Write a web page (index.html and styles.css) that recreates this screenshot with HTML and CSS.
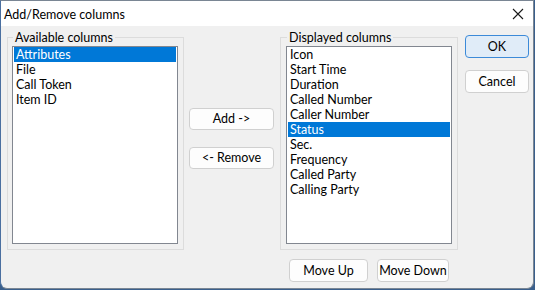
FILE: index.html
```
<!DOCTYPE html>
<html>
	<head>
		<meta charset="utf-8" />
		<title>Add/Remove columns</title>
		<link rel="stylesheet" href="styles.css">
	</head>
	<body>
		<div class="window">
			<div class="titlebar">
				<span class="title">Add/Remove columns</span>
				<svg class="close" width="12" height="12" viewBox="0 0 12 12">
					<path d="M1 1 L11 11 M11 1 L1 11" stroke="#1a1a1a" stroke-width="1.1" fill="none"/>
				</svg>
			</div>
			<div class="content">
				<fieldset class="group group-left">
					<legend>Available columns</legend>
					<ul class="list">
						<li class="on">Attributes</li>
						<li>File</li>
						<li>Call Token</li>
						<li>Item ID</li>
					</ul>
				</fieldset>

				<div class="mid">
					<button class="btn btn-mid">Add -&gt;</button>
					<button class="btn btn-mid">&lt;- Remove</button>
				</div>

				<div class="right">
					<fieldset class="group group-right">
						<legend>Displayed columns</legend>
						<ul class="list">
							<li>Icon</li>
							<li>Start Time</li>
							<li>Duration</li>
							<li>Called Number</li>
							<li>Caller Number</li>
							<li class="on">Status</li>
							<li>Sec.</li>
							<li>Frequency</li>
							<li>Called Party</li>
							<li>Calling Party</li>
						</ul>
					</fieldset>
					<div class="move">
						<button class="btn btn-up">Move Up</button>
						<button class="btn btn-down">Move Down</button>
					</div>
				</div>

				<div class="side">
					<button class="btn btn-side default">OK</button>
					<button class="btn btn-side">Cancel</button>
				</div>
			</div>
		</div>
	</body>
</html>
```

FILE: styles.css
```
*{
	margin: 0;
	padding: 0;
	box-sizing: border-box;
}
body{
	background: #3a5f8c;
	width: 535px;
	height: 290px;
	overflow: hidden;
	font-family: Lato, "Noto Sans", sans-serif;
	font-size: 12.5px;
	color: #000;
}
.window{
	width: 534px;
	height: 289px;
	background: #f0f0f0;
	border: 1px solid #7a8694;
	border-left-color: #4a6fa0;
	border-radius: 0 0 7px 7px;
	overflow: hidden;
}
.titlebar{
	height: 25px;
	background: #fff;
	display: flex;
	align-items: center;
	justify-content: space-between;
	padding: 0 9px 0 3px;
}
.title{
	line-height: 15px;
	margin-top: 1px;
}
.content{
	display: flex;
	align-items: flex-start;
	padding: 4px 0 0 6px;
}
.group{
	border: 1px solid #dcdcdc;
	padding: 1px 5px 5px 4px;
}
.group legend{
	margin-left: 1px;
	padding: 0 2px;
	line-height: 15px;
}
.group-left{
	width: 177px;
}
.group-right{
	width: 178px;
	padding-left: 5px;
}
.list{
	list-style: none;
	background: #fff;
	border: 1px solid #828790;
	height: 198px;
	padding: 0 1px;
}
.list li{
	height: 15px;
	line-height: 15px;
	padding-left: 2px;
	white-space: nowrap;
}
.list .on{
	background: #0078d7;
	color: #fff;
}
.btn{
	display: block;
	font: inherit;
	color: #000;
	background: #fdfdfd;
	border: 1px solid #d0d0d0;
	border-radius: 4px;
	height: 22px;
	line-height: 18px;
}
.mid{
	margin-left: 5px;
	padding-top: 78px;
	display: flex;
	flex-direction: column;
	gap: 17px;
}
.btn-mid{
	width: 85px;
}
.right{
	margin-left: 6px;
}
.move{
	display: flex;
	gap: 9px;
	padding: 9px 0 0 9px;
}
.btn-up{
	width: 79px;
	height: 23px;
}
.btn-down{
	width: 72px;
	height: 23px;
}
.side{
	margin-left: 7px;
	padding-top: 5px;
	display: flex;
	flex-direction: column;
	gap: 12px;
}
.btn-side{
	width: 64px;
	height: 23px;
}
.btn.default{
	background: #e0ecf8;
	border-color: #3c8ad8;
}
```
